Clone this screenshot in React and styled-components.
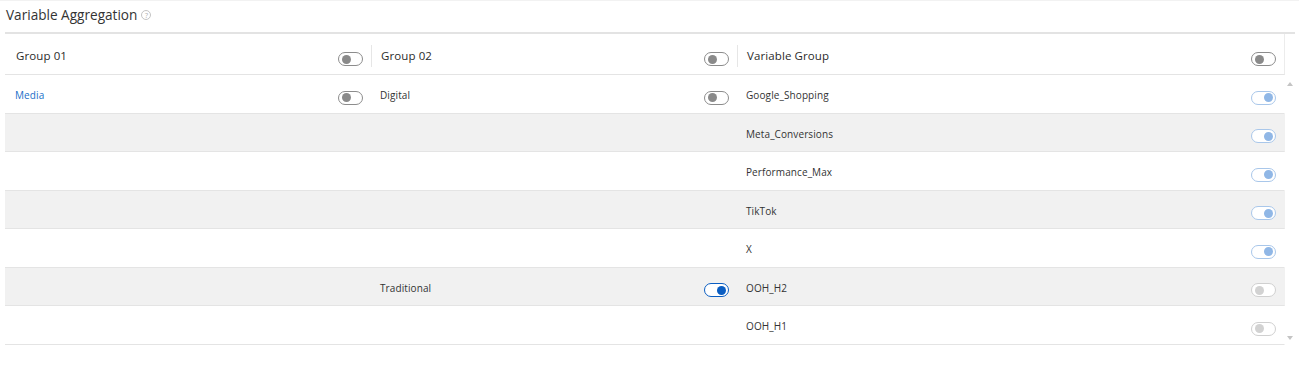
import React from "react";
import styled, { createGlobalStyle } from "styled-components";

const GlobalStyle = createGlobalStyle`
  body {
    margin: 0;
    background: #fff;
    font-family: "Open Sans", "Noto Sans", sans-serif;
    color: #333;
  }
`;

//////////////Style Components////////////////////////////////
const Page = styled.div`
  width: 1299px;
  height: 376px;
  border-top: 1px solid #f2f2f2;
  box-sizing: border-box;
  padding: 0 4px 0 5px;
`;

const TitleBar = styled.div`
  display: flex;
  align-items: flex-start;
  height: 33px;
  padding: 4px 0 0 1px;
  box-sizing: border-box;
  border-bottom: 2px solid #e3e3e3;
`;

const Title = styled.h2`
  margin: 0;
  font-size: 13.6px;
  font-weight: 400;
  color: #333;
`;

const Help = styled.span`
  display: inline-flex;
  align-items: center;
  justify-content: center;
  width: 8px;
  height: 8px;
  margin-left: 4px;
  margin-top: 5px;
  border: 1px solid #c4c4c4;
  border-radius: 50%;
  font-size: 7px;
  line-height: 1;
  color: #b0b0b0;
`;

const Body = styled.div`
  display: flex;
`;

const Table = styled.div`
  width: 1280px;
`;

const Scroll = styled.div`
  width: 10px;
  display: flex;
  flex-direction: column;
  justify-content: space-between;
  align-items: center;
  padding-top: 48px;
  height: 258px;
`;

const Arrow = styled.span`
  width: 0;
  height: 0;
  border-left: 3.5px solid transparent;
  border-right: 3.5px solid transparent;
  ${(p) =>
    p.$down
      ? "border-top: 4px solid #c4c4c4;"
      : "border-bottom: 4px solid #c4c4c4;"}
`;

const Row = styled.div`
  display: grid;
  grid-template-columns: 366px 366px 1fr;
  height: ${(p) => (p.$head ? "41px" : "38.5px")};
  box-sizing: border-box;
  border-bottom: 1px solid #e4e4e4;
  border-right: ${(p) => (p.$head ? "1px solid #ececec" : "1px solid transparent")};
  background: ${(p) => (p.$shade ? "#f1f1f1" : "#fff")};
`;

const Cell = styled.div`
  position: relative;
  display: flex;
  align-items: center;
  justify-content: space-between;
  padding: 0 8px 0 ${(p) => (p.$first ? "10px" : "9px")};
  ${(p) =>
    p.$head &&
    !p.$first &&
    `&::before {
      content: "";
      position: absolute;
      left: 0;
      top: 11px;
      height: 22px;
      width: 1px;
      background: #e6e6e6;
    }`}
`;

const Label = styled.span`
  font-size: ${(p) => (p.$head ? "11.5px" : "10px")};
  font-weight: ${(p) => (p.$head ? 500 : 400)};
  color: ${(p) => (p.$link ? "#1a6fc9" : p.$head ? "#2b2b2b" : "#333")};
  padding-left: ${(p) => (p.$head ? "1px" : "0")};
  margin-top: ${(p) => (p.$head ? "2px" : "3px")};
  letter-spacing: 0.1px;
`;

const palette = {
  off: { border: "#8c8c8c", knob: "#8a8a8a" },
  on: { border: "#0b5ec2", knob: "#0b5ec2" },
  soft: { border: "#a9c7ea", knob: "#90b7e6" },
  faded: { border: "#d0d0d0", knob: "#d2d2d2" },
};

const Track = styled.span`
  position: relative;
  display: inline-block;
  width: 25px;
  height: 14px;
  margin-top: ${(p) => (p.$head ? "10px" : "8px")};
  box-sizing: border-box;
  border-radius: 8px;
  border: 1px solid ${(p) => palette[p.$kind].border};
  background: #fff;
  flex: none;
  &::after {
    content: "";
    position: absolute;
    top: 1.5px;
    ${(p) => (p.$right ? "right: 2px;" : "left: 3px;")}
    width: 9px;
    height: 9px;
    border-radius: 50%;
    background: ${(p) => palette[p.$kind].knob};
  }
`;

/////////////////////////////////////////////////////

const rows = [
  ["Media", "Digital", "Google_Shopping", "off", "off", "soft"],
  ["", "", "Meta_Conversions", null, null, "soft"],
  ["", "", "Performance_Max", null, null, "soft"],
  ["", "", "TikTok", null, null, "soft"],
  ["", "", "X", null, null, "soft"],
  ["", "Traditional", "OOH_H2", null, "on", "faded"],
  ["", "", "OOH_H1", null, null, "faded"],
];

function Toggle({ kind, head }) {
  if (!kind) return null;
  return (
    <Track
      $kind={kind}
      $head={head}
      $right={kind !== "off" && kind !== "faded"}
    />
  );
}

export default function App() {
  return (
    <>
      <GlobalStyle />
      <Page>
        <TitleBar>
          <Title>Variable Aggregation</Title>
          <Help>?</Help>
        </TitleBar>
        <Body>
          <Table>
            <Row $head>
              {["Group 01", "Group 02", "Variable Group"].map((h, i) => (
                <Cell key={h} $head $first={i === 0}>
                  <Label $head>{h}</Label>
                  <Toggle kind="off" head />
                </Cell>
              ))}
            </Row>
            {rows.map((r, i) => (
              <Row key={r[2]} $shade={i % 2 === 1}>
                <Cell $first>
                  <Label $link>{r[0]}</Label>
                  <Toggle kind={r[3]} />
                </Cell>
                <Cell>
                  <Label>{r[1]}</Label>
                  <Toggle kind={r[4]} />
                </Cell>
                <Cell>
                  <Label>{r[2]}</Label>
                  <Toggle kind={r[5]} />
                </Cell>
              </Row>
            ))}
          </Table>
          <Scroll>
            <Arrow />
            <Arrow $down />
          </Scroll>
        </Body>
      </Page>
    </>
  );
}
